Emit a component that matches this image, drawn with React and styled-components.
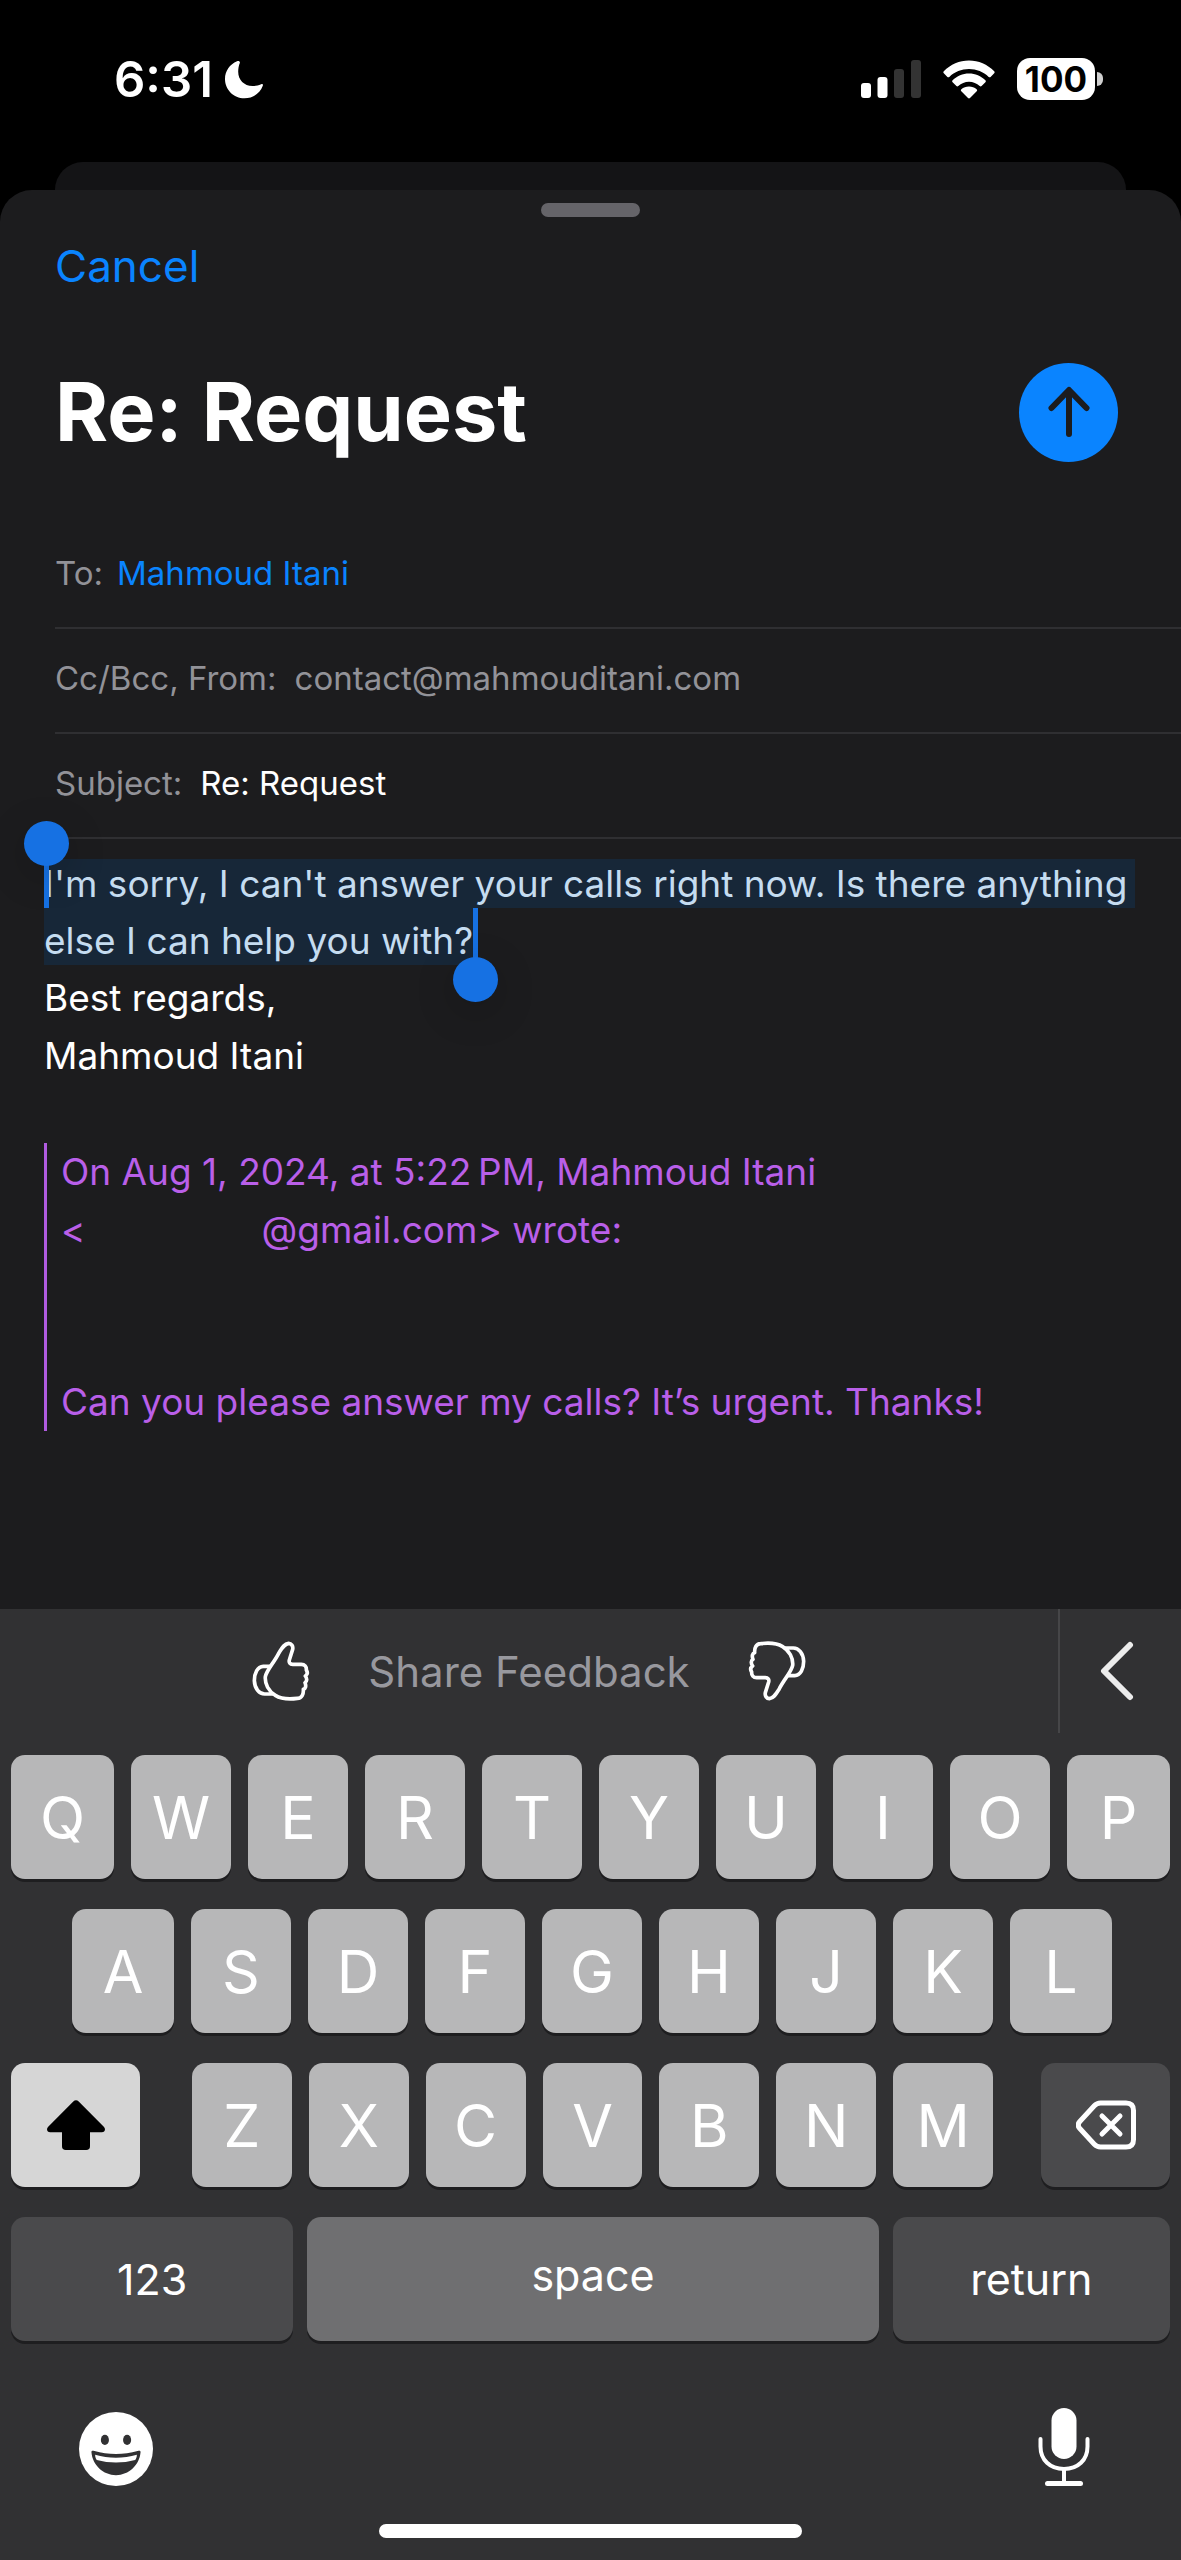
import React, { useState } from 'react';
import styled, { createGlobalStyle } from 'styled-components';

const GlobalStyle = createGlobalStyle`
	* {
		box-sizing: border-box;
	}

	body {
		margin: 0;
		background-color: #000000;
		color: #ffffff;
		font-family: Inter, 'Liberation Sans', sans-serif;
	}

	button,
	input {
		margin: 0;
		padding: 0;
		border: none;
		background: none;
		color: inherit;
		font-family: inherit;
	}

	button {
		cursor: pointer;
	}

	svg {
		display: block;
		flex: none;
	}
`;

const topRow = 'QWERTYUIOP'.split('');
const homeRow = 'ASDFGHJKL'.split('');
const bottomRow = 'ZXCVBNM'.split('');

function Moon() {
	return (
		<svg width='39' height='39' viewBox='0 0 39 39' fill='#fff'>
			<path d='M12 1.2C4.8 4.2 0 11 0 19c0 10.7 8.7 19.3 19.4 19.3 8.3 0 15.6-4.8 18.4-12.6.5-1.3-.5-2-1.6-1.5C33 25.4 30.5 26 27.5 26 19 26 13.2 20 13.2 11.8c0-3.4.5-6 1.6-8.8C15.3 1.6 14 .4 12 1.2z' />
		</svg>
	);
}

function Signal() {
	return (
		<svg width='60' height='38' viewBox='0 0 60 38' fill='#fff'>
			<rect x='0' y='23' width='10' height='15' rx='3' />
			<rect x='16.5' y='17' width='10' height='21' rx='3' />
			<rect x='33' y='9' width='10' height='29' rx='3' fill='#333' />
			<rect x='50' y='0' width='10' height='38' rx='3' fill='#333' />
		</svg>
	);
}

function Wifi() {
	return (
		<svg width='52' height='39' viewBox='0 0 52 39' fill='#fff'>
			<path d='M.8 11.2C7.6 4.6 16.4.6 26 .6s18.4 4 25.2 10.6c.6.6.6 1.4 0 2l-3.6 3.7c-.6.6-1.3.6-1.9 0C40.4 11.9 33.5 9 26 9S11.6 11.9 6.3 16.9c-.6.6-1.3.6-1.9 0L.8 13.2c-.6-.6-.6-1.4 0-2z' />
			<path d='M9.6 20.2C14 16 19.7 13.4 26 13.4s12 2.6 16.4 6.8c.6.6.6 1.4 0 2L38.6 26c-.6.6-1.3.6-1.9 0-2.9-2.6-6.6-4.2-10.7-4.2s-7.8 1.6-10.7 4.2c-.6.6-1.3.6-1.9 0l-3.8-3.8c-.6-.6-.6-1.4 0-2z' />
			<path d='M18.4 29.2c2-1.7 4.7-2.7 7.6-2.7s5.6 1 7.6 2.7c.7.6.7 1.4.1 2l-6.7 6.8c-.6.6-1.4.6-2 0l-6.7-6.8c-.6-.6-.6-1.4.1-2z' />
		</svg>
	);
}

function Thumb({ down }) {
	return (
		<svg
			width='58'
			height='62'
			viewBox='38 28 174 186'
			fill='none'
			stroke='#fff'
			strokeWidth='11'
			strokeLinejoin='round'
			strokeLinecap='round'
		>
			<g transform={down ? 'rotate(180 125 121)' : undefined}>
				<path d='M148 38C156 38 162 46 160 56L150 88C148 96 152 101 160 101H186C196 101 202 108 201 118C206 126 204 132 198 136C204 144 203 152 197 156C201 166 199 174 192 176C193 190 188 202 174 203C150 206 124 204 108 194C88 182 76 160 78 138C82 118 104 96 118 68C128 52 134 40 148 38Z' />
				<path d='M92 107H72C54 108 45 128 45 150C46 174 60 190 76 190H100' />
			</g>
		</svg>
	);
}

function SendArrow() {
	return (
		<svg
			width='42'
			height='52'
			viewBox='0 0 42 52'
			fill='none'
			stroke='#1c1c1e'
			strokeWidth='6'
			strokeLinecap='round'
			strokeLinejoin='round'
		>
			<path d='M21 48V5M3.500 22L21 4l17.500 18' />
		</svg>
	);
}

function Chevron() {
	return (
		<svg
			width='36'
			height='60'
			viewBox='0 0 36 60'
			fill='none'
			stroke='#ececec'
			strokeWidth='6'
			strokeLinecap='round'
			strokeLinejoin='round'
		>
			<path d='M31 4L5 30l26 26' />
		</svg>
	);
}

function ShiftIcon() {
	return (
		<svg width='58' height='50' viewBox='0 0 58 50' fill='#000'>
			<path d='M26.300 1.600c1.600-1.700 3.800-1.700 5.400 0L56.800 26.800c2.300 2.400 1 5.400-2 5.400H43v14c0 2.600-1.300 3.800-3.800 3.800H18.800c-2.500 0-3.800-1.200-3.800-3.800v-14H3.200c-3 0-4.300-3-2-5.400z' />
		</svg>
	);
}

function DeleteIcon() {
	return (
		<svg
			width='60'
			height='50'
			viewBox='0 0 60 50'
			fill='none'
			stroke='#fff'
			strokeWidth='5'
			strokeLinecap='round'
			strokeLinejoin='round'
		>
			<path d='M24.500 3H50c5 0 7.500 2.500 7.500 7.500v29c0 5-2.500 7.500-7.500 7.500H24.500c-2.600 0-4.400-.8-6.200-2.700L3.800 28.500c-2-2.200-2-4.800 0-7L18.300 5.700C20.100 3.800 21.900 3 24.500 3z' />
			<path d='M26 16l18 18M44 16L26 34' />
		</svg>
	);
}

function EmojiIcon() {
	return (
		<svg width='74' height='74' viewBox='60 70 220 220'>
			<circle cx='170' cy='180' r='110' fill='#fff' />
			<ellipse cx='137' cy='153' rx='12' ry='15' fill='#313133' />
			<ellipse cx='203' cy='153' rx='12' ry='15' fill='#313133' />
			<path
				d='M97 190C96 185 100 184 106 186C146 198 194 198 234 186C240 184 244 185 243 190C240 228 208 258 170 258C132 258 100 228 97 190Z'
				fill='#313133'
			/>
			<path
				d='M108 197C148 209 192 209 232 197C232 204 230 209 227 213C190 223 150 223 113 213C110 209 108 204 108 197Z'
				fill='#fff'
			/>
		</svg>
	);
}

function MicIcon() {
	return (
		<svg width='52' height='78' viewBox='0 0 52 78' fill='none' stroke='#fff'>
			<rect x='13.500' y='0' width='25' height='51' rx='12.500' fill='#fff' stroke='none' />
			<path
				d='M2.500 31v7.500C2.500 52 12 61 26 61s23.500-9 23.500-22.500V31'
				strokeWidth='4'
				strokeLinecap='round'
			/>
			<path d='M26 61v14' strokeWidth='4' />
			<path d='M9.500 75.500h33' strokeWidth='5' strokeLinecap='round' />
		</svg>
	);
}

export default function App() {
	const [mail, setMail] = useState({
		to: 'Mahmoud Itani',
		from: 'contact@mahmouditani.com',
		subject: 'Re: Request',
	});

	function handleChange(event) {
		setMail({ ...mail, [event.target.name]: event.target.value });
	}

	return (
		<React.Fragment>
			<GlobalStyle />
			<Screen>
				<StatusBar>
					<StatusGroup $gap={12}>
						<Time>6:31</Time>
						<Moon />
					</StatusGroup>
					<StatusGroup $gap={22}>
						<Signal />
						<Wifi />
						<Battery>
							<BatteryLevel>100</BatteryLevel>
							<BatteryCap />
						</Battery>
					</StatusGroup>
				</StatusBar>
				<BackSheet />
				<Sheet>
					<Grabber />
					<CancelButton type='button'>Cancel</CancelButton>
					<TitleRow>
						<Title>{mail.subject}</Title>
						<SendButton type='button' aria-label='Send'>
							<SendArrow />
						</SendButton>
					</TitleRow>
					<Fields>
						<Field $gap={14}>
							<label htmlFor='to'>To:</label>
							<FieldInput
								id='to'
								name='to'
								value={mail.to}
								onChange={handleChange}
								$color='#0a84ff'
							/>
						</Field>
						<Field $gap={18}>
							<label htmlFor='from'>Cc/Bcc, From:</label>
							<FieldInput
								id='from'
								name='from'
								value={mail.from}
								onChange={handleChange}
								$color='#929298'
							/>
						</Field>
						<Field $gap={18}>
							<label htmlFor='subject'>Subject:</label>
							<FieldInput
								id='subject'
								name='subject'
								value={mail.subject}
								onChange={handleChange}
								$color='#ffffff'
							/>
						</Field>
					</Fields>
					<Message>
						<Selection>
							<SelectedLine>
								<Handle $start />
								I'm sorry, I can't answer your calls right now. Is there anything
							</SelectedLine>
							<SelectedLine $next>
								else I can help you with?
								<Handle />
							</SelectedLine>
						</Selection>
						<p>Best regards,</p>
						<p>Mahmoud Itani</p>
						<Quote>
							<p>On Aug 1, 2024, at 5:22&#8239;PM, Mahmoud Itani</p>
							<p>
								&lt;
								<HiddenName />
								@gmail.com&gt; wrote:
							</p>
							<QuotedText>
								Can you please answer my calls? It’s urgent. Thanks!
							</QuotedText>
						</Quote>
					</Message>
				</Sheet>
				<Keyboard>
					<FeedbackBar>
						<Feedback>
							<button type='button' aria-label='Good suggestion'>
								<Thumb />
							</button>
							<span>Share Feedback</span>
							<button type='button' aria-label='Bad suggestion'>
								<Thumb down />
							</button>
						</Feedback>
						<CollapseButton type='button' aria-label='Back'>
							<Chevron />
						</CollapseButton>
					</FeedbackBar>
					<Keys>
						<KeyRow $columns='103fr repeat(8, 100fr) 103fr'>
							{topRow.map((letter) => (
								<Key type='button' key={letter}>
									{letter}
								</Key>
							))}
						</KeyRow>
						<KeyRow
							$columns='102fr repeat(7, 100fr) 102fr'
							$padding='0 58px 0 61px'
						>
							{homeRow.map((letter) => (
								<Key type='button' key={letter}>
									{letter}
								</Key>
							))}
						</KeyRow>
						<KeyRow $columns='129fr 805fr 129fr' $gap={48}>
							<Key type='button' aria-label='Shift' $tone='#d6d6d6'>
								<ShiftIcon />
							</Key>
							<KeyRow $columns='repeat(7, 1fr)' $padding='0 0 0 4px'>
								{bottomRow.map((letter) => (
									<Key type='button' key={letter}>
										{letter}
									</Key>
								))}
							</KeyRow>
							<Key type='button' aria-label='Delete' $tone='#4a4a4c'>
								<DeleteIcon />
							</Key>
						</KeyRow>
						<KeyRow $columns='282fr 571fr 277fr' $gap={14}>
							<WordKey type='button' $tone='#4a4a4c'>
								123
							</WordKey>
							<SpaceKey type='button' $tone='#6f6f71'>
								space
							</SpaceKey>
							<WordKey type='button' $tone='#4a4a4c'>
								return
							</WordKey>
						</KeyRow>
					</Keys>
					<BottomBar>
						<button type='button' aria-label='Emoji'>
							<EmojiIcon />
						</button>
						<button type='button' aria-label='Dictate'>
							<MicIcon />
						</button>
					</BottomBar>
					<HomeIndicator />
				</Keyboard>
			</Screen>
		</React.Fragment>
	);
}

const Screen = styled.div`
	display: flex;
	flex-direction: column;
	min-height: 100vh;
`;

const StatusBar = styled.div`
	display: flex;
	justify-content: space-between;
	align-items: center;
	height: 162px;
	padding: 0 78px 4px 114px;
`;

const StatusGroup = styled.div`
	display: flex;
	align-items: center;
	gap: ${(props) => props.$gap}px;
`;

const Time = styled.span`
	font-size: 49px;
	font-weight: 600;
`;

const Battery = styled.div`
	display: flex;
	align-items: center;
	gap: 2px;
`;

const BatteryLevel = styled.span`
	width: 78px;
	border-radius: 13px;
	background-color: #ffffff;
	color: #000000;
	font-size: 35px;
	font-weight: 700;
	line-height: 42px;
	text-align: center;
`;

const BatteryCap = styled.span`
	width: 6px;
	height: 14px;
	border-radius: 0 6px 6px 0;
	background-color: #cfcfcf;
`;

const BackSheet = styled.div`
	height: 28px;
	margin: 0 55px;
	border-radius: 28px 28px 0 0;
	background-color: #141416;
`;

const Sheet = styled.main`
	display: flex;
	flex: 1;
	flex-direction: column;
	border-radius: 32px 32px 0 0;
	background-color: #1c1c1e;
`;

const Grabber = styled.div`
	align-self: center;
	width: 99px;
	height: 14px;
	margin-top: 13px;
	border-radius: 7px;
	background-color: #656469;
`;

const CancelButton = styled.button`
	align-self: flex-start;
	margin: 21px 0 0 55px;
	color: #0a84ff;
	font-size: 44px;
	line-height: 56px;
`;

const TitleRow = styled.div`
	display: flex;
	justify-content: space-between;
	align-items: center;
	margin-top: 68px;
	padding: 0 63px 0 55px;
`;

const Title = styled.h1`
	margin: 0;
	font-size: 81px;
	font-weight: 700;
	line-height: 100px;
`;

const SendButton = styled.button`
	display: flex;
	justify-content: center;
	align-items: center;
	width: 99px;
	height: 99px;
	border-radius: 50%;
	background-color: #0a84ff;
`;

const Fields = styled.div`
	margin: 62px 0 0 55px;
`;

const Field = styled.div`
	display: flex;
	align-items: center;
	gap: ${(props) => props.$gap}px;
	height: 105px;
	padding-bottom: 6px;
	border-bottom: 2px solid #2f2f32;
	color: #929298;
	font-size: 33px;
`;

const FieldInput = styled.input`
	flex: 1;
	min-width: 0;
	outline: none;
	color: ${(props) => props.$color};
	font-size: 33px;
`;

const Message = styled.div`
	padding: 20px 44px 0;
	font-size: 37px;
	line-height: 58px;

	p {
		margin: 0;
	}
`;

const Selection = styled.div`
	margin-bottom: 4px;
	color: #c5dcf0;
	line-height: 48px;
	white-space: nowrap;
`;

const SelectedLine = styled.div`
	position: relative;
	width: fit-content;
	padding-top: ${(props) => (props.$next ? 9 : 1)}px;
	padding-right: ${(props) => (props.$next ? 2 : 8)}px;
	background-color: #172738;
`;

const Handle = styled.span`
	position: absolute;
	top: 0;
	bottom: 0;
	${(props) => (props.$start ? 'left: 0;' : 'right: -3px;')}
	width: 5px;
	background-color: #1671e3;

	&::after {
		content: '';
		position: absolute;
		left: -20px;
		${(props) => (props.$start ? 'bottom: 42px;' : 'top: 49px;')}
		width: 45px;
		height: 45px;
		border-radius: 50%;
		background-color: #1671e3;
		box-shadow: 0 10px 40px rgba(0, 0, 0, 0.2);
	}
`;

const Quote = styled.blockquote`
	margin: 58px 0 0;
	padding-left: 14px;
	border-left: 3px solid #b05be0;
	color: #b95fe9;
`;

const HiddenName = styled.span`
	display: inline-block;
	width: 176px;
`;

const QuotedText = styled.p`
	&& {
		margin-top: 114px;
	}
`;

const Keyboard = styled.section`
	padding-bottom: 22px;
	background-color: #313133;
`;

const FeedbackBar = styled.div`
	display: flex;
	height: 124px;
`;

const Feedback = styled.div`
	display: flex;
	flex: 1;
	justify-content: center;
	align-items: center;
	gap: 58px;
	color: #98989e;
	font-size: 42px;
`;

const CollapseButton = styled.button`
	display: flex;
	justify-content: center;
	align-items: center;
	width: 123px;
	padding-right: 8px;
	border-left: 2px solid #464648;
`;

const Keys = styled.div`
	display: flex;
	flex-direction: column;
	gap: 30px;
	padding: 22px 11px 0;
`;

const KeyRow = styled.div`
	display: grid;
	grid-template-columns: ${(props) => props.$columns};
	gap: ${(props) => props.$gap || 17}px;
	padding: ${(props) => props.$padding || 0};
`;

const Key = styled.button`
	display: flex;
	justify-content: center;
	align-items: center;
	min-width: 0;
	height: 124px;
	border-radius: 14px;
	background-color: ${(props) => props.$tone || '#b7b7b8'};
	box-shadow: 0 3px 0 #1e1e20;
	color: #ffffff;
	font-size: 59px;
`;

const WordKey = styled(Key)`
	font-size: 43px;
`;

const SpaceKey = styled(WordKey)`
	padding-bottom: 8px;
`;

const BottomBar = styled.div`
	display: flex;
	justify-content: space-between;
	align-items: flex-end;
	padding: 67px 91px 0 79px;
`;

const HomeIndicator = styled.div`
	width: 423px;
	height: 14px;
	margin: 38px auto 0;
	border-radius: 7px;
	background-color: #ffffff;
`;
